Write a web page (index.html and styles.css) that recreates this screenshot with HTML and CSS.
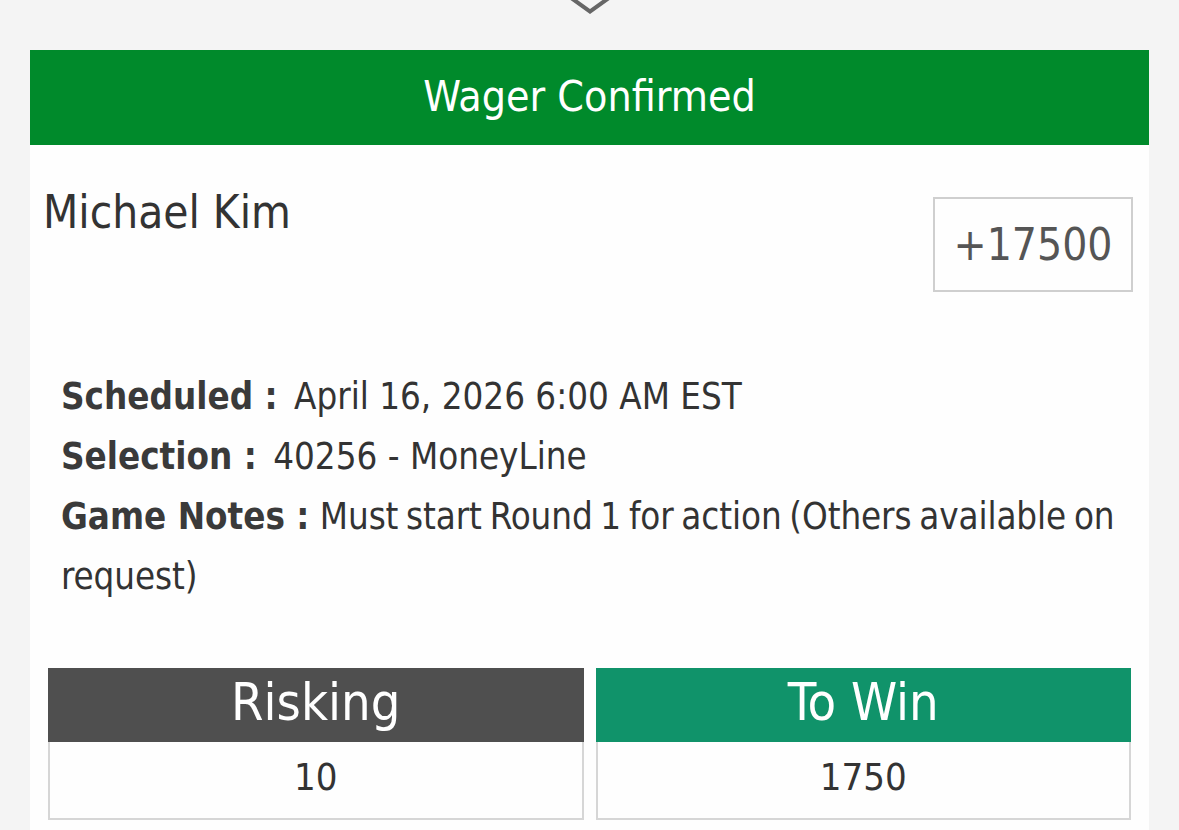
FILE: index.html
```html
<!DOCTYPE html>
<html lang="en">
<head>
<meta charset="utf-8">
<title>Wager Confirmed</title>
<link rel="stylesheet" href="styles.css">
</head>
<body>
<div class="top">
  <svg class="chevron" width="40" height="16" viewBox="0 0 40 16" aria-hidden="true">
    <polygon points="0.5,0 20,14 39.5,0 32.5,0 20,9 7.5,0" fill="#666"/>
  </svg>
</div>
<main class="card">
  <div class="banner">Wager Confirmed</div>
  <div class="body">
    <div class="name-row">
      <div class="name">Michael Kim</div>
      <div class="odds">+17500</div>
    </div>
    <div class="details">
      <div class="line"><span class="label label-wide">Scheduled :</span> April 16, 2026 6:00 AM EST</div>
      <div class="line"><span class="label label-wide">Selection :</span> 40256 - MoneyLine</div>
      <div class="line"><span class="label">Game Notes :</span> <span class="notes">Must start Round 1 for action (Others available on request)</span></div>
    </div>
    <div class="amounts">
      <div class="amount">
        <div class="amount-head head-risk">Risking</div>
        <div class="amount-value">10</div>
      </div>
      <div class="amount">
        <div class="amount-head head-win">To Win</div>
        <div class="amount-value">1750</div>
      </div>
    </div>
  </div>
</main>
</body>
</html>
```

FILE: styles.css
```css
html, body {
  margin: 0;
  padding: 0;
}

body {
  background: #f4f4f4;
  font-family: "DejaVu Sans", "Liberation Sans", sans-serif;
  font-stretch: condensed;
  color: #333;
  overflow: hidden;
  height: 830px;
}

.top {
  height: 50px;
  display: flex;
  justify-content: center;
  align-items: flex-start;
}

.chevron {
  display: block;
}

.card {
  margin: 0 30px;
  background: #fefefe;
}

.banner {
  height: 95px;
  background: #008a2b;
  color: #fff;
  font-size: 42.5px;
  display: flex;
  align-items: center;
  justify-content: center;
  padding-bottom: 2px;
  box-sizing: border-box;
}

.body {
  padding: 42px 16px 40px 13px;
}

.name-row {
  display: flex;
  justify-content: space-between;
  align-items: flex-start;
}

.name {
  font-size: 45.5px;
  line-height: 52px;
  color: #333;
}

.odds {
  margin-top: 10px;
  width: 196px;
  height: 91px;
  border: 2px solid #cfcfcf;
  display: flex;
  align-items: center;
  justify-content: center;
  font-size: 44px;
  color: #555;
}

.details {
  margin-top: 75px;
  padding: 0 0 0 18px;
  font-size: 36.4px;
  line-height: 60px;
  color: #333;
}

.label {
  font-weight: bold;
  color: #3a3a3a;
}

.label-wide {
  margin-right: 6px;
}

.notes {
  word-spacing: -2.5px;
  letter-spacing: -0.1px;
}

.amounts {
  margin-top: 61px;
  padding: 0 2px 0 5px;
  display: grid;
  grid-template-columns: 1fr 1fr;
  gap: 12px;
}

.amount-head {
  height: 74px;
  display: flex;
  align-items: center;
  justify-content: center;
  color: #fff;
  font-size: 52px;
  padding-bottom: 6px;
  box-sizing: border-box;
}

.head-risk {
  background: #4f4f4f;
}

.head-win {
  background: #10936a;
}

.amount-value {
  height: 70px;
  padding-bottom: 6px;
  border: 2px solid #d6d6d6;
  border-top: none;
  display: flex;
  align-items: center;
  justify-content: center;
  font-size: 38px;
  box-sizing: content-box;
  color: #333;
}
```
